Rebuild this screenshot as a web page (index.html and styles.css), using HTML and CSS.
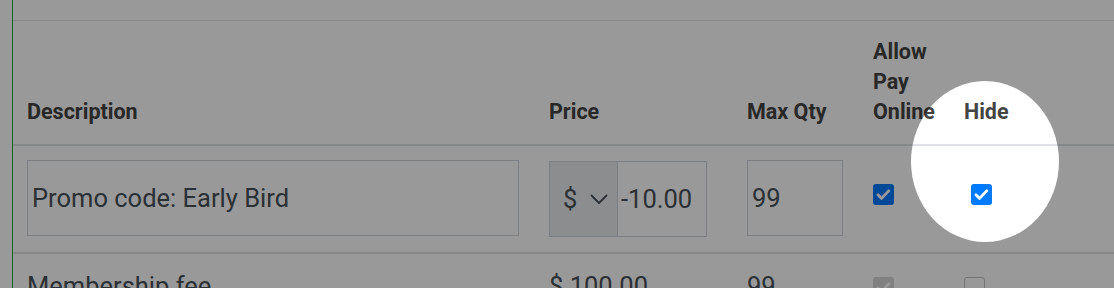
FILE: index.html
```html
<!DOCTYPE html>
<html lang="en">
<head>
<meta charset="utf-8">
<title>Items</title>
<link rel="stylesheet" href="styles.css">
</head>
<body>
<div class="frame">
  <table class="items">
    <colgroup>
      <col class="c-desc"><col class="c-price"><col class="c-qty"><col class="c-pay"><col class="c-hide">
    </colgroup>
    <thead>
      <tr>
        <th>Description</th>
        <th>Price</th>
        <th>Max Qty</th>
        <th>Allow Pay Online</th>
        <th>Hide</th>
      </tr>
    </thead>
    <tbody>
      <tr class="row-edit">
        <td><input class="field" type="text" value="Promo code: Early Bird"></td>
        <td>
          <div class="price-group">
            <div class="currency"><span>$</span><svg class="chev" width="18" height="11" viewBox="0 0 18 11"><polyline points="1.5,1.5 9,9 16.5,1.5" fill="none" stroke="#495057" stroke-width="1.8" stroke-linecap="round" stroke-linejoin="round"/></svg></div>
            <input class="field amount" type="text" value="-10.00">
          </div>
        </td>
        <td><input class="field" type="text" value="99"></td>
        <td class="check-cell"><span class="box on"><svg width="21" height="21" viewBox="0 0 21 21"><polyline points="5,10.8 8.6,14.4 15.8,6.8" fill="none" stroke="#fff" stroke-width="2.8" stroke-linecap="round" stroke-linejoin="round"/></svg></span></td>
        <td class="check-cell"><span class="box on shift"><svg width="21" height="21" viewBox="0 0 21 21"><polyline points="5,10.8 8.6,14.4 15.8,6.8" fill="none" stroke="#fff" stroke-width="2.8" stroke-linecap="round" stroke-linejoin="round"/></svg></span></td>
      </tr>
      <tr class="row-static">
        <td>Membership fee</td>
        <td>$ 100.00</td>
        <td>99</td>
        <td class="check-cell"><span class="box disabled"><svg width="21" height="21" viewBox="0 0 21 21"><polyline points="5,10.8 8.6,14.4 15.8,6.8" fill="none" stroke="#fff" stroke-width="2.8" stroke-linecap="round" stroke-linejoin="round"/></svg></span></td>
        <td class="check-cell"><span class="box off"></span></td>
      </tr>
    </tbody>
  </table>
</div>
<div class="spotlight"></div>
</body>
</html>
```

FILE: styles.css
```css
html, body {
  margin: 0;
  padding: 0;
  background: #fff;
  overflow: hidden;
  height: 100%;
}

body {
  font-family: Roboto, "Liberation Sans", sans-serif;
  color: #495057;
  position: relative;
}

.frame {
  margin-left: 12px;
  border-left: 1px solid #28a745;
  min-height: 100vh;
  padding-top: 20px;
  box-sizing: border-box;
}

.items {
  width: 100%;
  border-collapse: collapse;
  table-layout: fixed;
  border-top: 1px solid #e3e3e3;
}

.c-desc { width: 522px; }
.c-price { width: 198px; }
.c-qty { width: 126px; }
.c-pay { width: 91px; }

.items th {
  text-align: left;
  vertical-align: bottom;
  padding: 16px 10px 17px 14px;
  font-weight: 700;
  font-size: 21.5px;
  line-height: 30px;
  color: #444;
  border-bottom: 2px solid #dee2e6;
}

.row-edit td {
  vertical-align: top;
  padding: 14px 16px 15px 14px;
  border-bottom: 2px solid #dee2e6;
}

.row-static td {
  vertical-align: top;
  padding: 14px 16px 10px 14px;
  font-size: 25.5px;
  line-height: 36px;
  color: #495057;
}

.field {
  display: block;
  width: 100%;
  height: 76px;
  box-sizing: border-box;
  border: 1px solid #ced4da;
  border-radius: 0;
  padding: 0 4px;
  margin: 0;
  font-family: Roboto, "Liberation Sans", sans-serif;
  font-size: 25.5px;
  color: #495057;
  background: #fff;
  outline: none;
}

.price-group {
  display: flex;
  width: 158px;
  height: 76px;
  margin-top: 1px;
}

.currency {
  display: flex;
  align-items: center;
  gap: 13px;
  width: 69px;
  flex: none;
  box-sizing: border-box;
  padding-left: 13px;
  background: #e9ecef;
  border: 1px solid #ced4da;
  font-size: 25.5px;
  color: #495057;
}

.chev {
  display: block;
  margin-top: 1px;
}

.field.amount {
  flex: 1;
  width: auto;
  min-width: 0;
  height: 76px;
  border-left: none;
  padding-left: 3px;
}

.row-edit .check-cell {
  padding-top: 38px;
}

.row-static .check-cell {
  padding-top: 23px;
}

.box {
  display: block;
  width: 21px;
  height: 21px;
  box-sizing: border-box;
  border-radius: 3px;
}

.box svg {
  display: block;
}

.box.on {
  background: #007bff;
}

.box.shift {
  margin-left: 7px;
}

.box.disabled {
  background: #d8d8d8;
}

.box.off {
  background: #fff;
  border: 1.5px solid #c4c4c4;
}

.spotlight {
  position: absolute;
  left: 911px;
  top: 81px;
  width: 148px;
  height: 161px;
  border-radius: 50%;
  box-shadow: 0 0 0 3000px rgba(0, 0, 0, 0.4);
  pointer-events: none;
}
```
